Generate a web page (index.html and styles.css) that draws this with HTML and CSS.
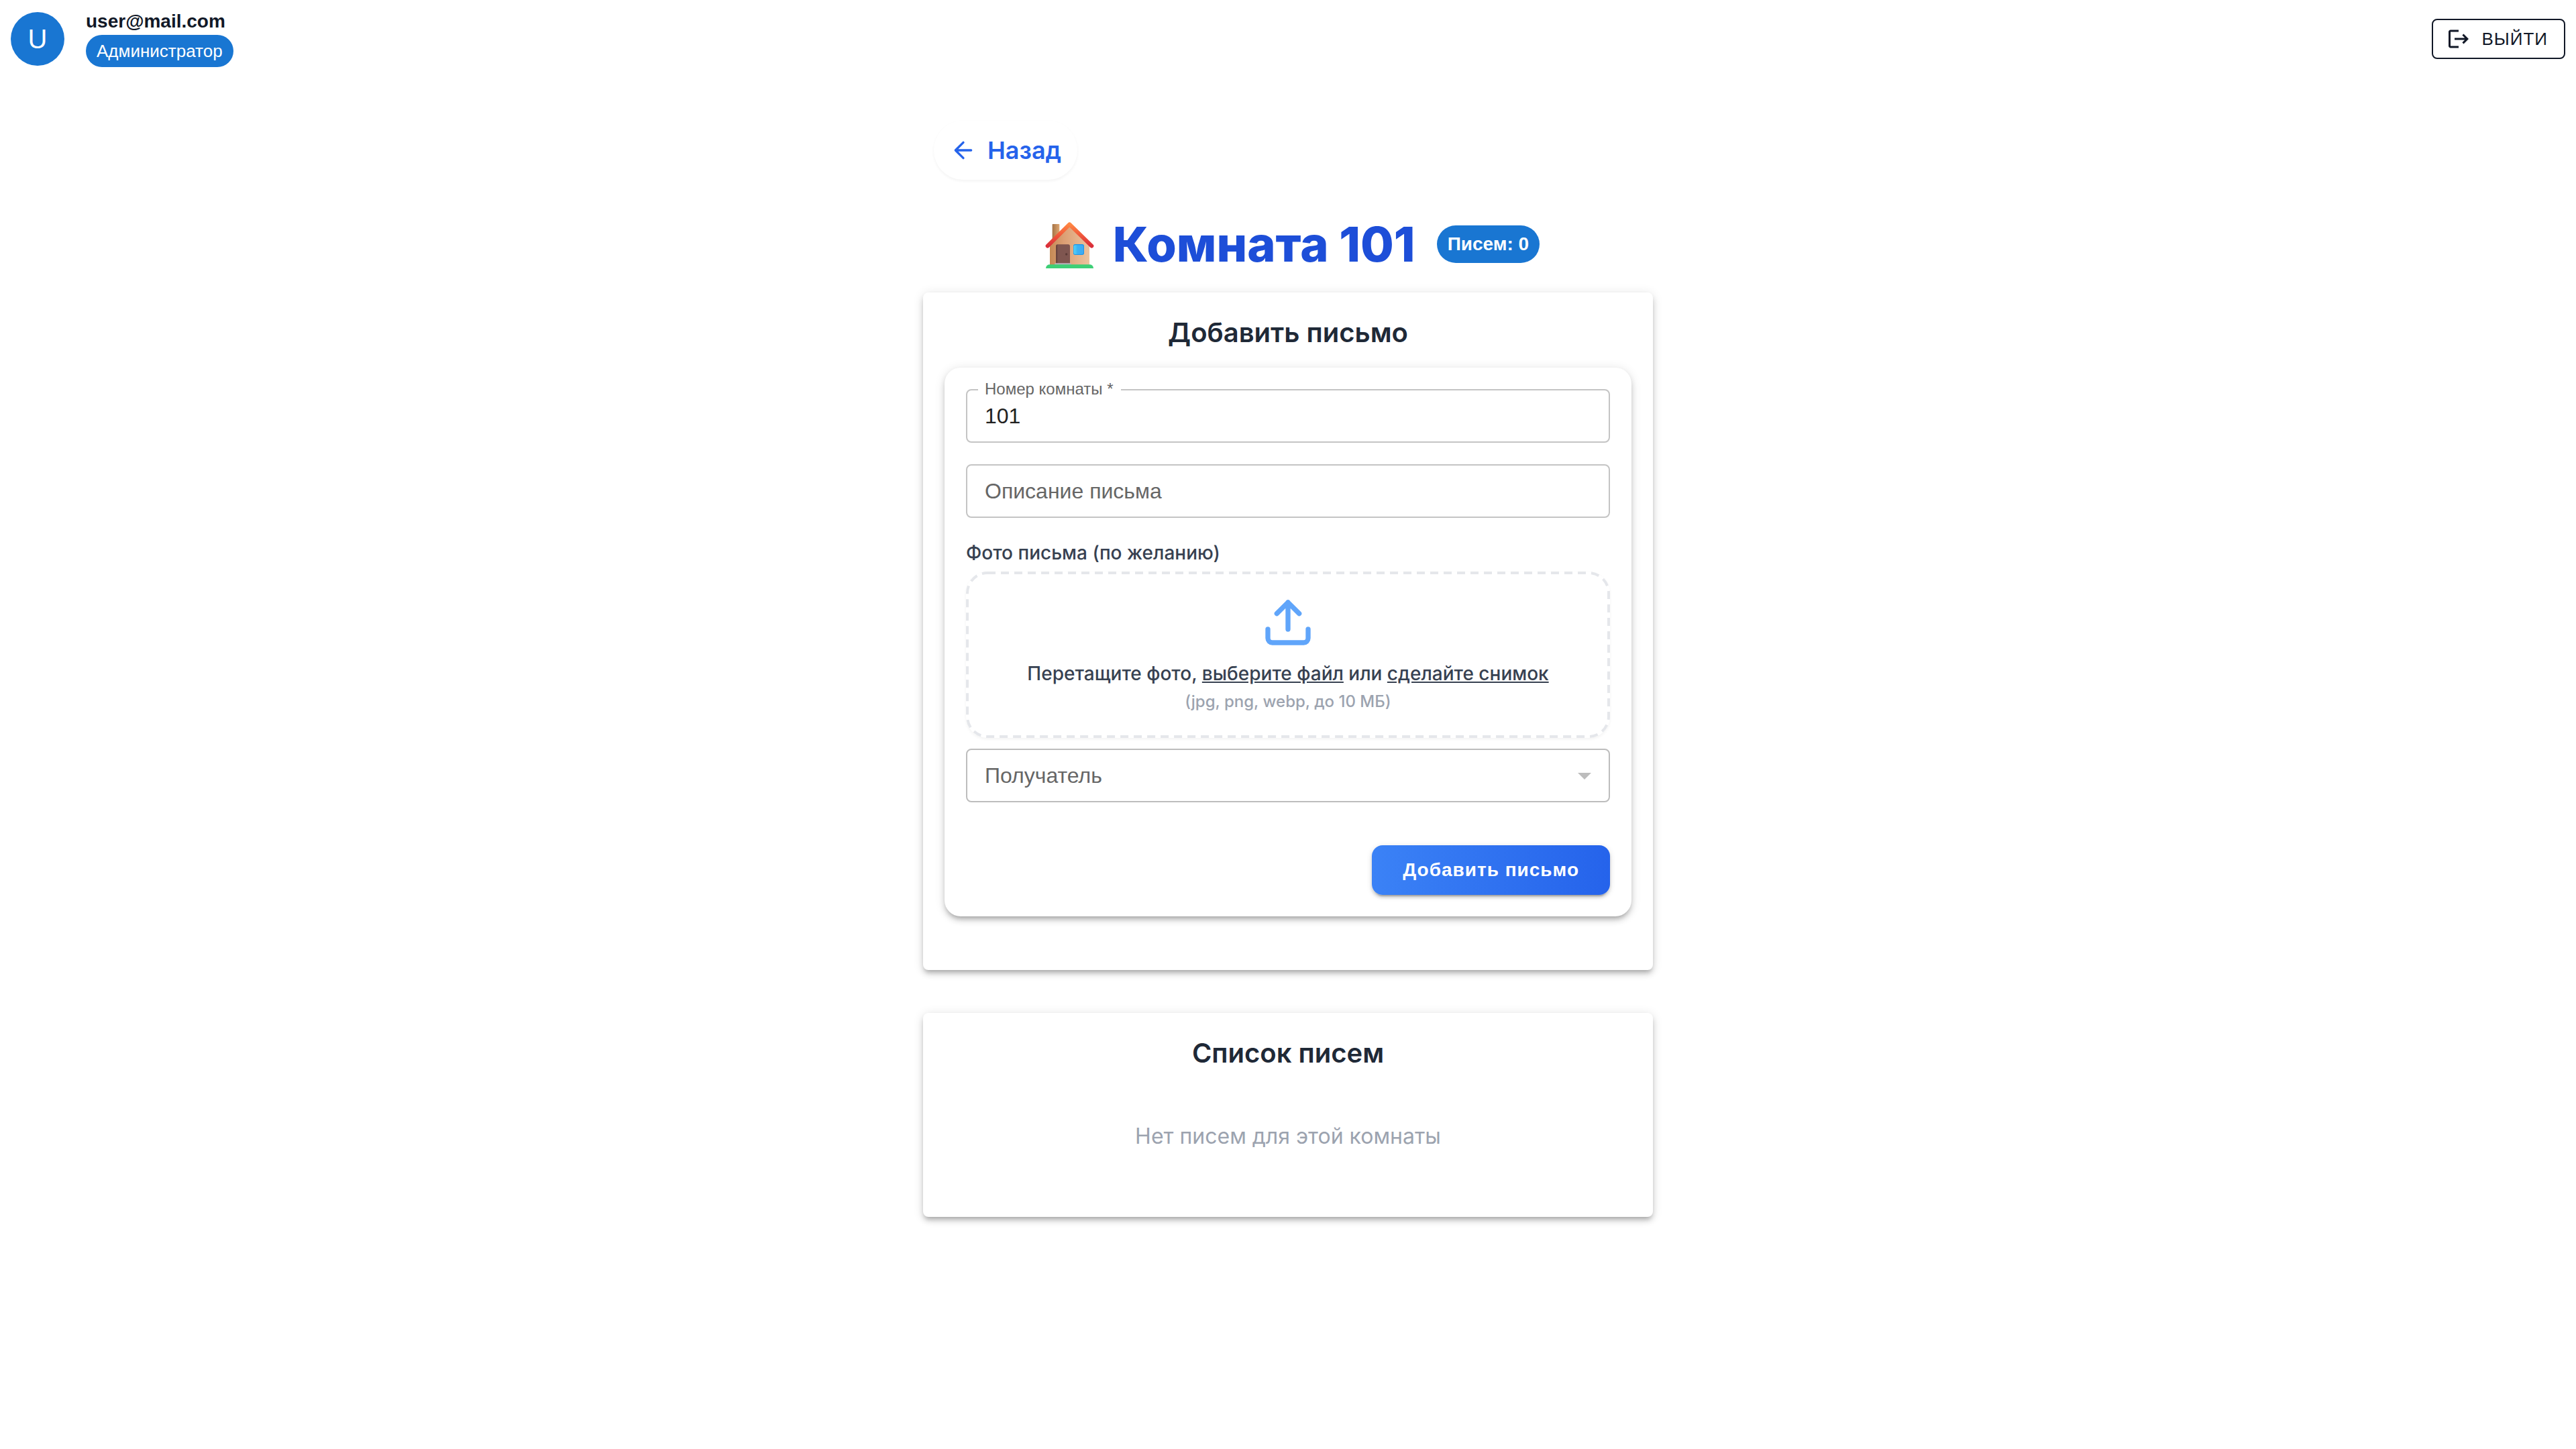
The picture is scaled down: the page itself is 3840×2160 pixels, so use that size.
FILE: index.html
```html
<!DOCTYPE html>
<html lang="ru">
<head>
<meta charset="utf-8">
<meta name="viewport" content="width=device-width, initial-scale=1">
<title>Комната 101</title>
<link rel="stylesheet" href="styles.css">
</head>
<body>
<header class="topbar">
  <div class="user">
    <div class="avatar">U</div>
    <div class="user-info">
      <span class="user-mail">user@mail.com</span>
      <span class="chip chip-role">Администратор</span>
    </div>
  </div>
  <button class="logout" type="button">
    <svg class="logout-icon" viewBox="0 0 24 24" fill="currentColor" aria-hidden="true"><path d="M17 7l-1.41 1.41L18.17 11H8v2h10.17l-2.58 2.58L17 17l5-5zM4 5h8V3H4c-1.1 0-2 .9-2 2v14c0 1.1.9 2 2 2h8v-2H4z"/></svg>
    ВЫЙТИ
  </button>
</header>

<main class="page">
  <a class="back" href="#">
    <svg class="back-icon" viewBox="0 0 24 24" fill="none" stroke="currentColor" stroke-width="2" stroke-linecap="round" stroke-linejoin="round" aria-hidden="true"><path d="M19 12H5M12 19l-7-7 7-7"/></svg>
    Назад
  </a>

  <div class="title-row">
    <h1 class="title">
      <svg class="house" viewBox="555 504 294 216" aria-hidden="true">
        <defs>
          <linearGradient id="wall" x1="0" y1="0" x2="1" y2="0"><stop offset="0" stop-color="#c58a55"/><stop offset=".35" stop-color="#dc9f74"/><stop offset="1" stop-color="#edc39e"/></linearGradient>
          <linearGradient id="roof" x1="0" y1="0" x2="0" y2="1"><stop offset="0" stop-color="#ff8743"/><stop offset=".5" stop-color="#f0583b"/><stop offset="1" stop-color="#d92f3a"/></linearGradient>
          <linearGradient id="chimney" x1="0" y1="0" x2="1" y2="0"><stop offset="0" stop-color="#a57346"/><stop offset="1" stop-color="#dfa771"/></linearGradient>
          <linearGradient id="glass" x1="0" y1="0" x2="1" y2="0"><stop offset="0" stop-color="#55d4f8"/><stop offset=".4" stop-color="#3bb2f5"/><stop offset="1" stop-color="#3fa9f3"/></linearGradient>
        </defs>
        <rect x="626" y="522" width="32" height="80" rx="2" fill="url(#chimney)"/>
        <path d="M615 612 703 530 792 612V706H615Z" fill="url(#wall)"/>
        <path d="M642 703V622Q642 613 651 613H697Q705 613 705 622V703Z" fill="#7f5650"/>
        <path d="M642 703V622Q642 614 649 613V703Z" fill="#69443e"/>
        <circle cx="689" cy="657" r="5" fill="#5b3a36"/>
        <rect x="637" y="697" width="73" height="9" rx="3" fill="#b9b3bd"/>
        <rect x="720" y="612" width="48" height="48" rx="8" fill="#1f95e6"/>
        <rect x="722" y="616" width="43" height="41" rx="6" fill="url(#glass)"/>
        <path d="M605 620 703 523 802 620" fill="none" stroke="url(#roof)" stroke-width="18" stroke-linecap="round" stroke-linejoin="round"/>
        <path d="M597 720Q598 703 616 703H791Q809 703 810 720Z" fill="#3ecf76"/>
      </svg>
      Комната 101
    </h1>
    <span class="chip chip-count">Писем: 0</span>
  </div>

  <section class="card card-add">
    <h2 class="card-title">Добавить письмо</h2>
    <form class="form">
      <div class="field field-filled">
        <input class="control" id="room" type="text" value="101">
        <label class="field-label" for="room">Номер комнаты *</label>
      </div>
      <div class="field">
        <input class="control" id="descr" type="text">
        <label class="field-label" for="descr">Описание письма</label>
      </div>
      <div class="photo">
        <label class="photo-label" for="photo">Фото письма (по желанию)</label>
        <div class="dropzone">
          <svg class="dashes" aria-hidden="true"><rect class="dashes-line" x="2" y="2" rx="30"/></svg>
          <svg class="upload-icon" viewBox="0 0 24 24" fill="none" stroke="currentColor" stroke-width="2.2" stroke-linecap="round" stroke-linejoin="round" aria-hidden="true"><path d="M21 15v4a2 2 0 0 1-2 2H5a2 2 0 0 1-2-2v-4M17 8l-5-5-5 5M12 3v12"/></svg>
          <p class="drop-text">Перетащите фото, <a href="#">выберите файл</a> или <a href="#">сделайте снимок</a></p>
          <p class="drop-hint">(jpg, png, webp, до 10 МБ)</p>
          <input class="file" id="photo" type="file">
        </div>
      </div>
      <div class="field field-select">
        <select class="control" id="recipient"><option value=""></option></select>
        <label class="field-label" for="recipient">Получатель</label>
        <svg class="caret" viewBox="0 0 24 24" fill="currentColor" aria-hidden="true"><path d="M7 10l5 5 5-5z"/></svg>
      </div>
      <button class="submit" type="submit">Добавить письмо</button>
    </form>
  </section>

  <section class="card card-list">
    <h2 class="card-title">Список писем</h2>
    <p class="empty">Нет писем для этой комнаты</p>
  </section>
</main>
</body>
</html>
```
FILE: styles.css
```css
* { box-sizing: border-box; }

body {
  margin: 0;
  background: #fff;
  color: #111827;
  font-family: Inter, "Liberation Sans", sans-serif;
}

h1, h2, p { margin: 0; }

.topbar {
  display: flex;
  align-items: center;
  justify-content: space-between;
  padding: 16px;
  font-family: "Liberation Sans", sans-serif;
}

.user {
  display: flex;
  align-items: center;
  gap: 32px;
}

.avatar {
  display: flex;
  align-items: center;
  justify-content: center;
  width: 80px;
  height: 80px;
  border-radius: 50%;
  background: #1976d2;
  color: #fff;
  font-size: 40px;
}

.user-info {
  display: flex;
  flex-direction: column;
  align-items: flex-start;
  gap: 4px;
}

.user-mail {
  font-size: 28px;
  font-weight: 700;
  line-height: 32px;
  color: #111827;
}

.chip {
  padding: 0 16px;
  border-radius: 28px;
  background: #1976d2;
  color: #fff;
  white-space: nowrap;
}

.chip-role {
  font-size: 26px;
  line-height: 48px;
}

.chip-count {
  font-family: "Liberation Sans", sans-serif;
  font-size: 28px;
  font-weight: 700;
  line-height: 56px;
}

.logout {
  display: flex;
  align-items: center;
  gap: 16px;
  height: 60px;
  padding: 0 24px 0 20px;
  border: 2px solid #111827;
  border-radius: 8px;
  background: transparent;
  color: #111827;
  font-family: inherit;
  font-size: 26px;
  letter-spacing: 1px;
}

.logout-icon {
  width: 36px;
  height: 36px;
}

.page {
  display: flex;
  flex-direction: column;
  width: 100%;
  max-width: 1088px;
  margin: 0 auto;
  padding: 64px 0;
}

.back {
  display: flex;
  align-items: center;
  align-self: flex-start;
  gap: 16px;
  height: 88px;
  margin-left: 16px;
  padding: 0 24px;
  border-radius: 44px;
  box-shadow: 0 2px 4px rgba(0, 0, 0, .05);
  color: #2563eb;
  font-size: 36px;
  font-weight: 600;
  text-decoration: none;
}

.back-icon {
  width: 40px;
  height: 40px;
}

.title-row {
  display: flex;
  align-items: center;
  justify-content: center;
  gap: 32px;
  margin: 52px 0 28px;
}

.title {
  display: flex;
  align-items: center;
  gap: 16px;
  color: #1d4ed8;
  font-size: 72px;
  font-weight: 800;
  line-height: 88px;
}

.house {
  width: 98px;
  height: 72px;
}

.card {
  padding: 32px;
  border-radius: 8px;
  background: #fff;
  box-shadow: 0 6px 6px -4px rgba(0, 0, 0, .2), 0 6px 8px rgba(0, 0, 0, .14), 0 2px 16px rgba(0, 0, 0, .12);
}

.card-add {
  margin-bottom: 64px;
  padding-bottom: 80px;
}

.card-title {
  margin-bottom: 24px;
  color: #1f2937;
  font-size: 40px;
  font-weight: 600;
  line-height: 56px;
  text-align: center;
}

.form {
  display: flex;
  flex-direction: column;
  gap: 32px;
  padding: 32px;
  border-radius: 24px;
  background: #fff;
  box-shadow: 0 6px 6px -4px rgba(0, 0, 0, .2), 0 6px 8px rgba(0, 0, 0, .14), 0 2px 16px rgba(0, 0, 0, .12);
}

.field {
  position: relative;
}

.control {
  display: block;
  width: 100%;
  height: 80px;
  padding: 0 26px;
  border: 2px solid #c4c4c4;
  border-radius: 8px;
  background: transparent;
  color: #212121;
  font-family: "Liberation Sans", sans-serif;
  font-size: 32px;
  appearance: none;
}

.field-label {
  position: absolute;
  top: 16px;
  left: 28px;
  color: #666;
  font-family: "Liberation Sans", sans-serif;
  font-size: 32px;
  line-height: 48px;
}

.field-filled .field-label {
  top: -16px;
  left: 18px;
  padding: 0 12px 0 10px;
  background: #fff;
  font-size: 24px;
  line-height: 32px;
}

.field-select {
  margin-top: -16px;
}

.field-select .control {
  border-color: #bdbdbd;
}

.caret {
  position: absolute;
  top: 16px;
  right: 14px;
  width: 48px;
  height: 48px;
  color: #bdbdbd;
  pointer-events: none;
}

.photo {
  display: flex;
  flex-direction: column;
  gap: 8px;
}

.photo-label {
  color: #374151;
  font-size: 28px;
  font-weight: 500;
  line-height: 40px;
}

.dropzone {
  position: relative;
  display: flex;
  flex-direction: column;
  align-items: center;
  padding: 36px;
  border-radius: 32px;
  box-shadow: 0 2px 4px rgba(0, 0, 0, .05);
}

.dashes {
  position: absolute;
  inset: 0;
  width: 100%;
  height: 100%;
  pointer-events: none;
}

.dashes-line {
  width: calc(100% - 4px);
  height: calc(100% - 4px);
  fill: none;
  stroke: #e5e7eb;
  stroke-width: 4px;
  stroke-dasharray: 12 8;
}

.upload-icon {
  width: 80px;
  height: 80px;
  margin-bottom: 16px;
  color: #60a5fa;
}

.drop-text {
  color: #374151;
  font-size: 28px;
  font-weight: 500;
  line-height: 40px;
}

.drop-text a {
  color: inherit;
}

.drop-hint {
  margin-top: 4px;
  color: #9ca3af;
  font-size: 24px;
  font-weight: 500;
  line-height: 36px;
}

.file {
  position: absolute;
  bottom: 0;
  left: 50%;
  width: 1px;
  height: 1px;
  opacity: 0;
}

.submit {
  align-self: flex-end;
  height: 74px;
  margin-top: 32px;
  padding: 0 46px;
  border: 0;
  border-radius: 16px;
  background: linear-gradient(90deg, #3b82f6, #2563eb);
  box-shadow: 0 6px 2px -4px rgba(0, 0, 0, .2), 0 4px 4px rgba(0, 0, 0, .14), 0 2px 10px rgba(0, 0, 0, .12);
  color: #fff;
  font-family: "Liberation Sans", sans-serif;
  font-size: 28px;
  font-weight: 700;
  letter-spacing: 1px;
}

.empty {
  padding: 48px 0 64px;
  color: #9ca3af;
  font-size: 32px;
  line-height: 48px;
  text-align: center;
}
```
